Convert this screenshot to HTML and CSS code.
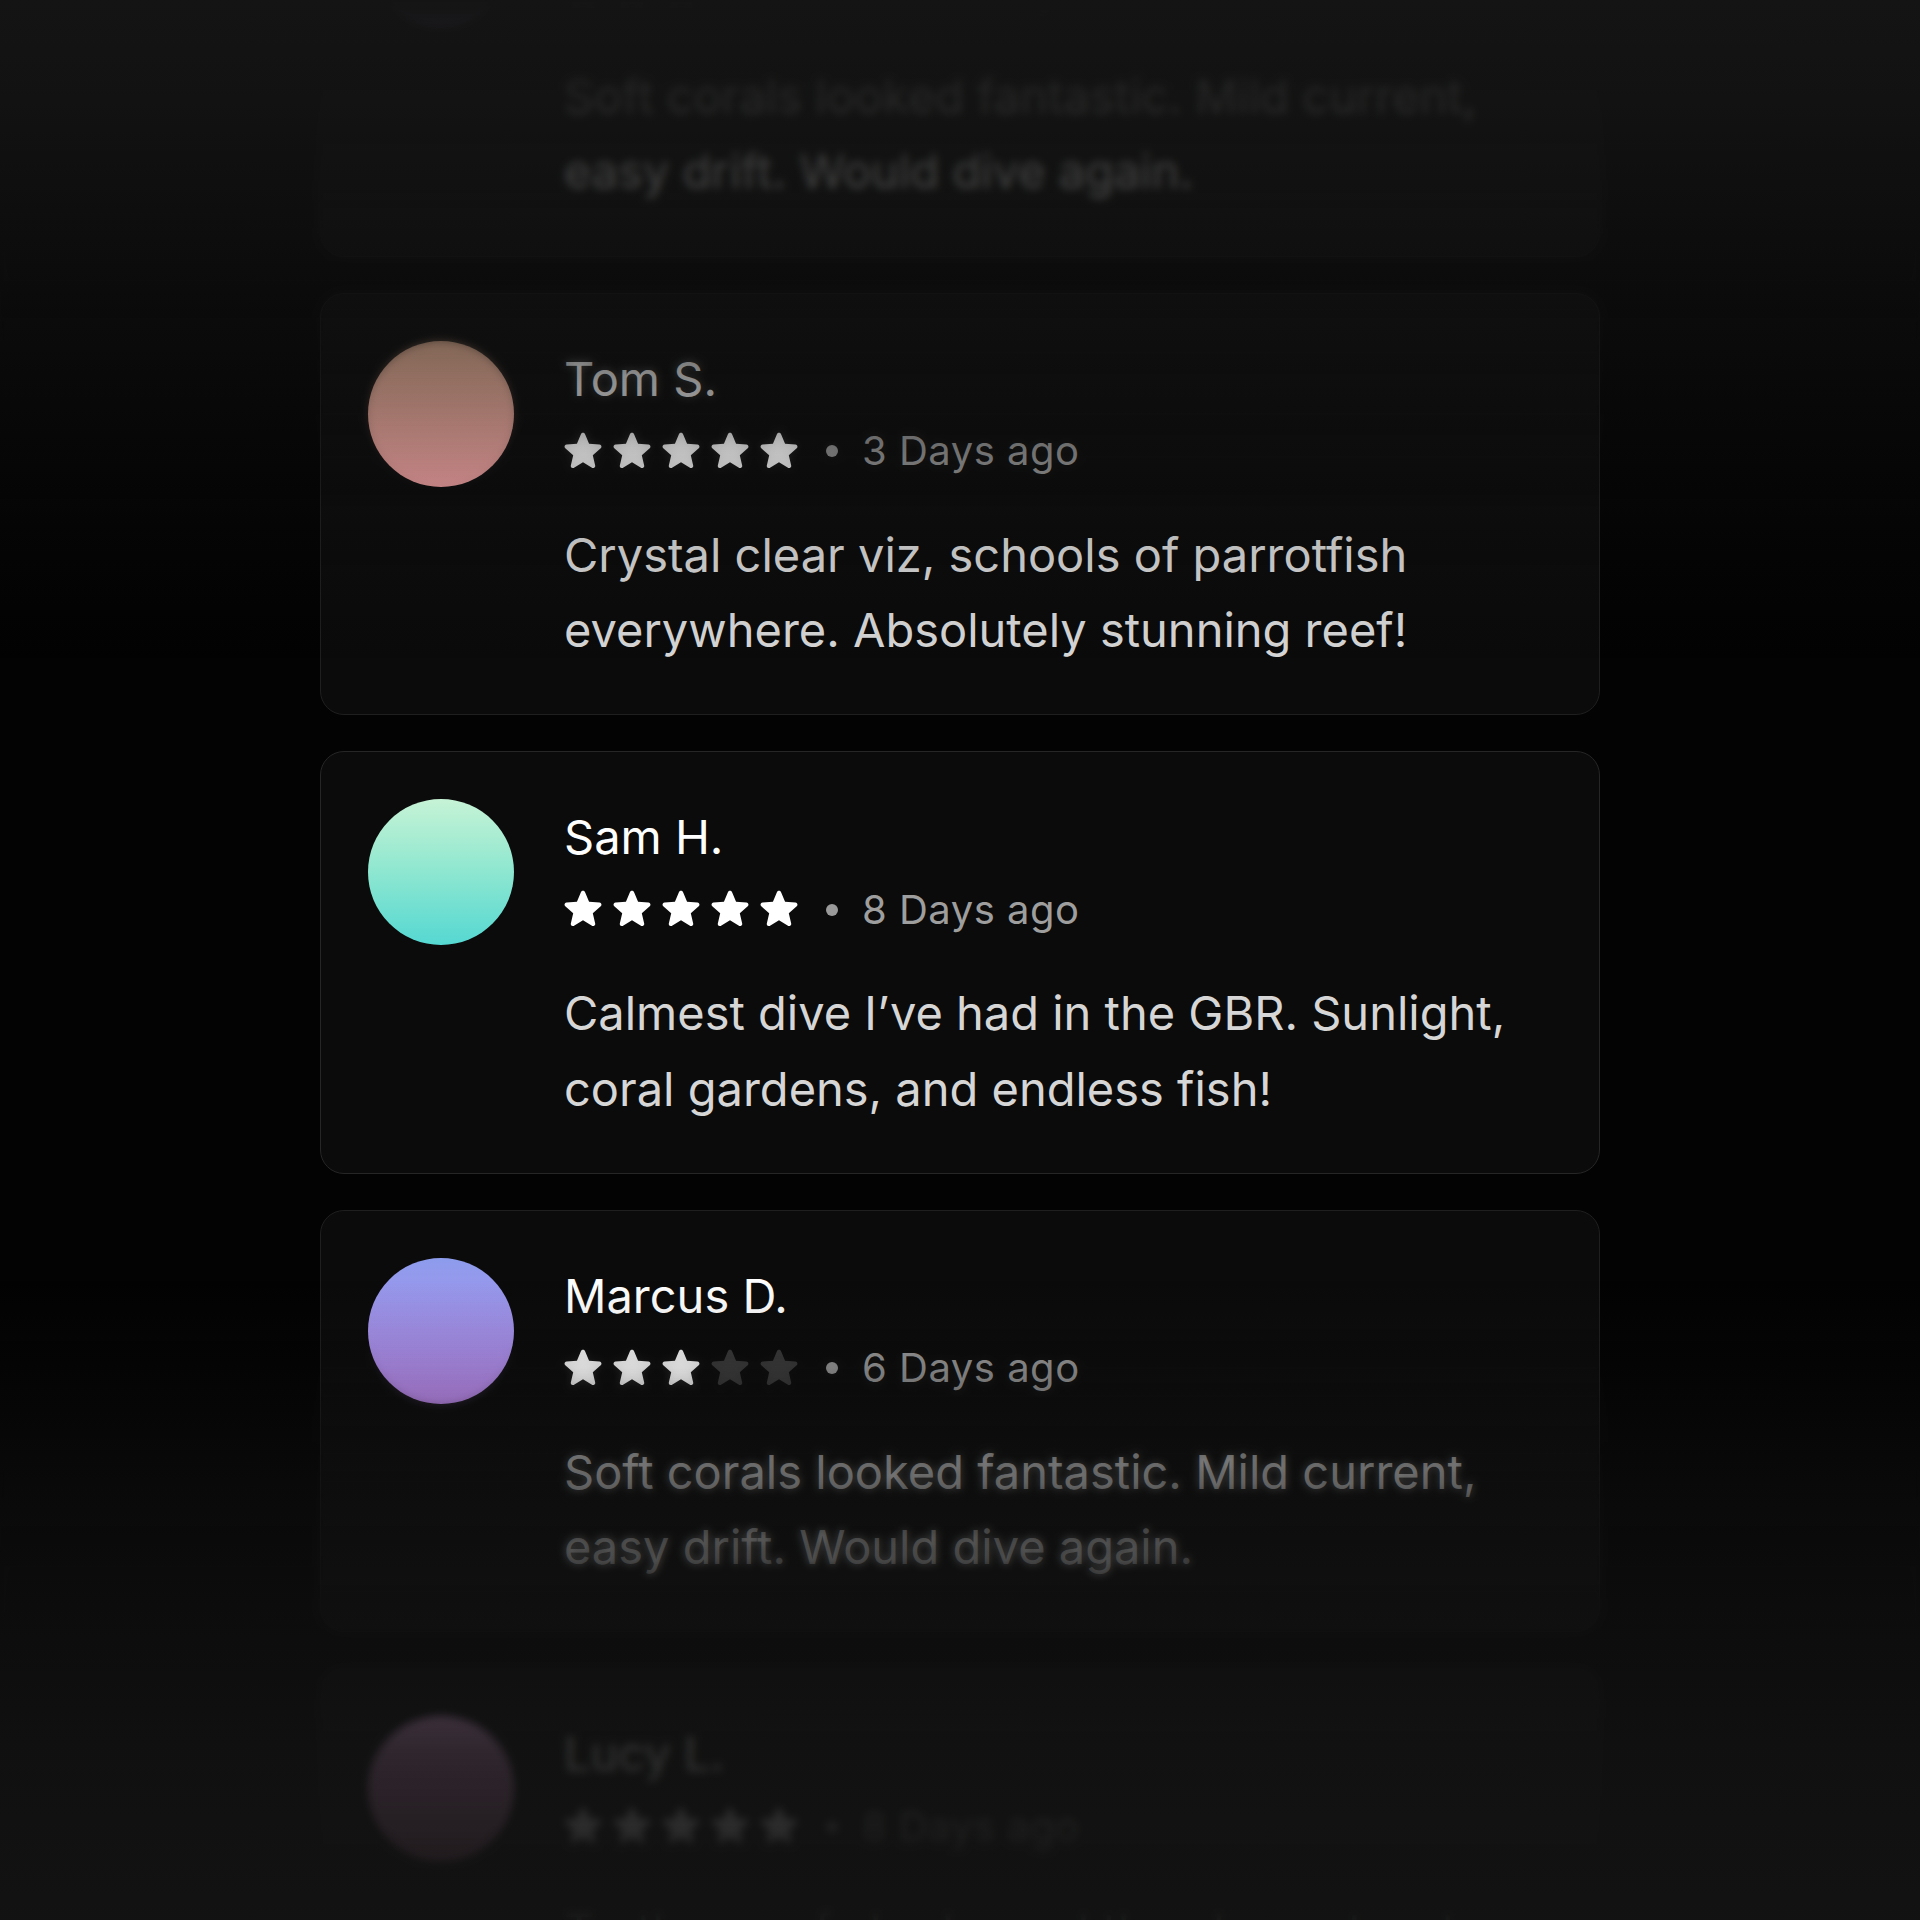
FILE: index.html
```html
<!DOCTYPE html>
<html lang="en">
<head>
<meta charset="utf-8">
<title>Reviews</title>
<link rel="stylesheet" href="styles.css">
</head>
<body>
<svg class="defs" width="0" height="0" aria-hidden="true">
  <defs>
    <path id="star" d="M12 17.27l4.15 2.51c.76.46 1.690-.22 1.49-1.08l-1.1-4.72 3.67-3.18c.67-.58.31-1.68-.57-1.75l-4.83-.41-1.89-4.46c-.34-.81-1.5-.81-1.84 0L9.19 8.630l-4.83.41c-.88.07-1.24 1.17-.57 1.75l3.67 3.18-1.1 4.72c-.2.86.73 1.54 1.49 1.08l4.15-2.5z"/>
  </defs>
</svg>
<main class="reviews">
  <article class="card">
    <div class="avatar avatar-violet"></div>
    <div class="content">
      <div class="name">Marcus D.</div>
      <div class="meta">
        <div class="stars">
          <svg class="star" viewBox="3.2 2.3 17.6 17.6"><use href="#star"/></svg>
          <svg class="star" viewBox="3.2 2.3 17.6 17.6"><use href="#star"/></svg>
          <svg class="star" viewBox="3.2 2.3 17.6 17.6"><use href="#star"/></svg>
          <svg class="star star-off" viewBox="3.2 2.3 17.6 17.6"><use href="#star"/></svg>
          <svg class="star star-off" viewBox="3.2 2.3 17.6 17.6"><use href="#star"/></svg>
        </div>
        <span class="dot"></span>
        <span class="date">6 Days ago</span>
      </div>
      <p class="text">Soft corals looked fantastic. Mild current, easy drift. Would dive again.</p>
    </div>
  </article>

  <article class="card">
    <div class="avatar avatar-peach"></div>
    <div class="content">
      <div class="name">Tom S.</div>
      <div class="meta">
        <div class="stars">
          <svg class="star" viewBox="3.2 2.3 17.6 17.6"><use href="#star"/></svg>
          <svg class="star" viewBox="3.2 2.3 17.6 17.6"><use href="#star"/></svg>
          <svg class="star" viewBox="3.2 2.3 17.6 17.6"><use href="#star"/></svg>
          <svg class="star" viewBox="3.2 2.3 17.6 17.6"><use href="#star"/></svg>
          <svg class="star" viewBox="3.2 2.3 17.6 17.6"><use href="#star"/></svg>
        </div>
        <span class="dot"></span>
        <span class="date">3 Days ago</span>
      </div>
      <p class="text">Crystal clear viz, schools of parrotfish everywhere. Absolutely stunning reef!</p>
    </div>
  </article>

  <article class="card card-active">
    <div class="avatar avatar-mint"></div>
    <div class="content">
      <div class="name">Sam H.</div>
      <div class="meta">
        <div class="stars">
          <svg class="star" viewBox="3.2 2.3 17.6 17.6"><use href="#star"/></svg>
          <svg class="star" viewBox="3.2 2.3 17.6 17.6"><use href="#star"/></svg>
          <svg class="star" viewBox="3.2 2.3 17.6 17.6"><use href="#star"/></svg>
          <svg class="star" viewBox="3.2 2.3 17.6 17.6"><use href="#star"/></svg>
          <svg class="star" viewBox="3.2 2.3 17.6 17.6"><use href="#star"/></svg>
        </div>
        <span class="dot"></span>
        <span class="date">8 Days ago</span>
      </div>
      <p class="text">Calmest dive I’ve had in the GBR. Sunlight, coral gardens, and endless fish!</p>
    </div>
  </article>

  <article class="card">
    <div class="avatar avatar-violet"></div>
    <div class="content">
      <div class="name">Marcus D.</div>
      <div class="meta">
        <div class="stars">
          <svg class="star" viewBox="3.2 2.3 17.6 17.6"><use href="#star"/></svg>
          <svg class="star" viewBox="3.2 2.3 17.6 17.6"><use href="#star"/></svg>
          <svg class="star" viewBox="3.2 2.3 17.6 17.6"><use href="#star"/></svg>
          <svg class="star star-off" viewBox="3.2 2.3 17.6 17.6"><use href="#star"/></svg>
          <svg class="star star-off" viewBox="3.2 2.3 17.6 17.6"><use href="#star"/></svg>
        </div>
        <span class="dot"></span>
        <span class="date">6 Days ago</span>
      </div>
      <p class="text">Soft corals looked fantastic. Mild current, easy drift. Would dive again.</p>
    </div>
  </article>

  <article class="card">
    <div class="avatar avatar-rose"></div>
    <div class="content">
      <div class="name">Lucy L.</div>
      <div class="meta">
        <div class="stars">
          <svg class="star" viewBox="3.2 2.3 17.6 17.6"><use href="#star"/></svg>
          <svg class="star" viewBox="3.2 2.3 17.6 17.6"><use href="#star"/></svg>
          <svg class="star" viewBox="3.2 2.3 17.6 17.6"><use href="#star"/></svg>
          <svg class="star" viewBox="3.2 2.3 17.6 17.6"><use href="#star"/></svg>
          <svg class="star" viewBox="3.2 2.3 17.6 17.6"><use href="#star"/></svg>
        </div>
        <span class="dot"></span>
        <span class="date">8 Days ago</span>
      </div>
      <p class="text">Turtles, reef sharks and the clearest water I’ve ever seen. Unreal day.</p>
    </div>
  </article>
</main>
<div class="fade fade-top"></div>
<div class="fade fade-bottom"></div>
</body>
</html>
```

FILE: styles.css
```css
* {
  box-sizing: border-box;
}

html,
body {
  margin: 0;
  height: 1920px;
  overflow: hidden;
}

body {
  position: relative;
  background: #030303;
  font-family: "Inter", "Liberation Sans", sans-serif;
  color: #fff;
}

.defs {
  position: absolute;
  width: 0;
  height: 0;
}

.reviews {
  width: 1280px;
  margin: -166px auto 0;
  display: flex;
  flex-direction: column;
  gap: 36px;
}

.card {
  display: flex;
  gap: 50px;
  padding: 47px;
  border: 1px solid #1f1f1f;
  border-radius: 24px;
  background: #0b0b0b;
}

.card-active {
  border-color: #262626;
}

.avatar {
  flex: 0 0 146px;
  width: 146px;
  height: 146px;
  border-radius: 50%;
}

.avatar-mint {
  background: linear-gradient(180deg, #c6f3d6 0%, #93e8d0 45%, #55d8d2 100%);
}

.avatar-peach {
  background: linear-gradient(180deg, #e0ae90 0%, #f4a2a4 100%);
}

.avatar-violet {
  background: linear-gradient(180deg, #8d9cec 0%, #c08af0 100%);
}

.avatar-rose {
  background: linear-gradient(180deg, #d9a0d8 0%, #c07aa0 100%);
}

.content {
  flex: 1;
  display: flex;
  flex-direction: column;
  min-width: 0;
}

.name {
  font-size: 47px;
  line-height: 1.6;
  font-weight: 400;
  color: #ffffff;
}

.meta {
  margin-top: 5px;
  display: flex;
  align-items: center;
  height: 61px;
}

.stars {
  display: flex;
  gap: 11px;
  margin-bottom: 5px;
}

.star {
  width: 38px;
  height: 38px;
  fill: #ffffff;
  display: block;
}

.star-off {
  fill: #3a3a3a;
}

.dot {
  width: 12px;
  height: 12px;
  margin: 0 24px 0 28px;
  border-radius: 50%;
  background: #9a9a9a;
}

.date {
  font-size: 40px;
  letter-spacing: 0.5px;
  line-height: 1.6;
  color: #9e9e9e;
}

.text {
  margin: 35px 0 0;
  font-size: 47px;
  line-height: 1.6;
  color: #d6d6d6;
}

.fade {
  position: absolute;
  left: 0;
  right: 0;
  pointer-events: none;
}

.fade::before,
.fade::after {
  content: "";
  position: absolute;
  inset: 0;
}

.fade-top {
  top: 0;
  height: 680px;
}

.fade-top::before {
  backdrop-filter: blur(4px);
  -webkit-mask-image: linear-gradient(180deg, #000 0px, #000 200px, rgba(0,0,0,0.25) 380px, transparent 500px);
  mask-image: linear-gradient(180deg, #000 0px, #000 200px, rgba(0,0,0,0.25) 380px, transparent 500px);
}

.fade-top::after {
  background: linear-gradient(180deg,
    rgba(20, 20, 20, 1) 0px,
    rgba(20, 20, 20, 0.9) 100px,
    rgba(20, 20, 20, 0.4) 375px,
    rgba(20, 20, 20, 0.1) 555px,
    rgba(20, 20, 20, 0) 660px);
}

.fade-bottom {
  top: 1280px;
  height: 640px;
}

.fade-bottom::before {
  backdrop-filter: blur(4px);
  -webkit-mask-image: linear-gradient(180deg, transparent 60px, rgba(0,0,0,0.45) 200px, #000 420px);
  mask-image: linear-gradient(180deg, transparent 60px, rgba(0,0,0,0.45) 200px, #000 420px);
}

.fade-bottom::after {
  background: linear-gradient(180deg,
    rgba(19, 19, 19, 0) 0px,
    rgba(19, 19, 19, 0.16) 85px,
    rgba(19, 19, 19, 0.4) 190px,
    rgba(19, 19, 19, 0.55) 270px,
    rgba(19, 19, 19, 0.85) 470px,
    rgba(19, 19, 19, 0.96) 640px);
}
```
